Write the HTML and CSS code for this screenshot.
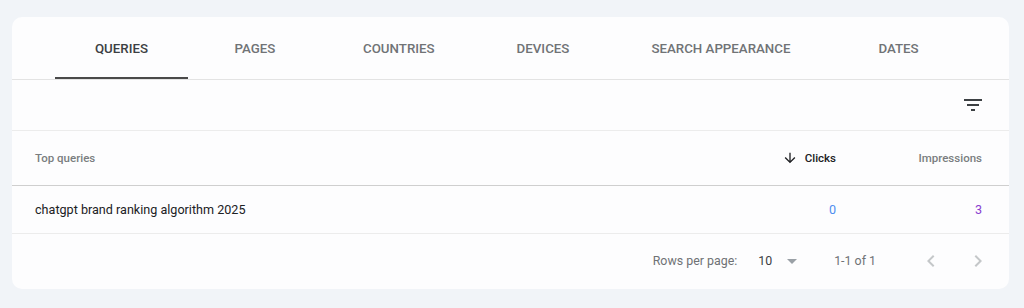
FILE: index.html
```html
<!DOCTYPE html>
<html>
<head>
<meta charset="utf-8">
<link rel="stylesheet" href="styles.css">
</head>
<body>
<div class="card">
  <div class="tabs">
    <div class="tab active">Queries</div>
    <div class="tab">Pages</div>
    <div class="tab">Countries</div>
    <div class="tab">Devices</div>
    <div class="tab">Search appearance</div>
    <div class="tab">Dates</div>
  </div>
  <div class="toolbar">
    <svg class="filter" width="24" height="24" viewBox="0 0 24 24"><path d="M10 18h4v-2h-4v2zM3 6v2h18V6H3zm3 7h12v-2H6v2z" fill="#3c4043"/></svg>
  </div>
  <div class="row head">
    <div class="c-query">Top queries</div>
    <div class="c-num sorted">
      <svg width="16" height="16" viewBox="0 0 24 24"><path d="M20 12l-1.41-1.41L13 16.17V4h-2v12.17l-5.58-5.59L4 12l8 8 8-8z" fill="#202124"/></svg>
      <span>Clicks</span>
    </div>
    <div class="c-num">Impressions</div>
  </div>
  <div class="row data">
    <div class="c-query">chatgpt brand ranking algorithm 2025</div>
    <div class="c-num clicks">0</div>
    <div class="c-num impr">3</div>
  </div>
  <div class="footer">
    <span class="rpp">Rows per page:</span>
    <span class="sel">10</span>
    <svg class="caret" width="12" height="12" viewBox="0 0 12 12"><path d="M1 4h10l-5 5z" fill="#9aa0a6"/></svg>
    <span class="range">1-1 of 1</span>
    <div class="pager">
      <svg width="24" height="24" viewBox="0 0 24 24"><path d="M15.41 7.41L14 6l-6 6 6 6 1.41-1.41L10.83 12z" fill="#c4c7c9"/></svg>
      <svg width="24" height="24" viewBox="0 0 24 24"><path d="M8.59 16.59L10 18l6-6-6-6-1.41 1.41L13.17 12z" fill="#c4c7c9"/></svg>
    </div>
  </div>
</div>
</body>
</html>
```
FILE: styles.css
```css
* { box-sizing: border-box; }
html, body { margin: 0; padding: 0; }
body {
  background: #f1f4f8;
  font-family: Roboto, "Liberation Sans", Arial, sans-serif;
  color: #202124;
  padding: 17px 15px 0 12px;
  height: 308px;
}
.card {
  background: #fdfdfe;
  border-radius: 10px;
  height: 272px;
  overflow: hidden;
}
.tabs {
  display: flex;
  height: 63px;
  padding-left: 43px;
  border-bottom: 1px solid #e3e3e3;
}
.tab {
  min-width: 134px;
  padding: 0 41px;
  display: flex;
  align-items: center;
  justify-content: center;
  text-transform: uppercase;
  font-size: 13.3px;
  font-weight: 500;
  color: #707376;
  border-bottom: 2px solid transparent;
  padding-top: 2px;
}
.tab.active {
  color: #3c4043;
  border-bottom-color: #4a4a4a;
}
.tab:first-child { min-width: 133px; padding: 2px 39.5px 0; }
.toolbar {
  height: 51px;
  display: flex;
  align-items: center;
  justify-content: flex-end;
  padding-right: 24px;
  border-bottom: 1px solid #ececec;
}
.row {
  display: flex;
  align-items: center;
  padding: 0 27px 0 23px;
}
.row.head {
  height: 55px;
  border-bottom: 1px solid #cfcfcf;
  font-size: 11.5px;
  font-weight: 500;
  color: #7a7d80;
}
.row.data {
  height: 48px;
  border-bottom: 1px solid #ececec;
  font-size: 12.6px;
  padding-bottom: 1px;
}
.c-query { flex: 1; }
.c-num {
  width: 146px;
  text-align: right;
  display: flex;
  justify-content: flex-end;
  align-items: center;
}
.sorted { color: #202124; gap: 7px; }
.sorted svg { display: block; }
.clicks { color: #4f8ef0; }
.impr { color: #8a3fd0; }
.footer {
  height: 55px;
  display: flex;
  align-items: center;
  justify-content: flex-end;
  padding-right: 19px;
  font-size: 12.4px;
  color: #6f7275;
  padding-bottom: 2px;
}
.rpp { margin-right: 21px; }
.sel { color: #3c4043; }
.caret { margin-left: 14px; display: block; }
.range { margin-left: 36px; }
.pager { display: flex; gap: 23px; margin-left: 43px; }
.pager svg { display: block; }
```
